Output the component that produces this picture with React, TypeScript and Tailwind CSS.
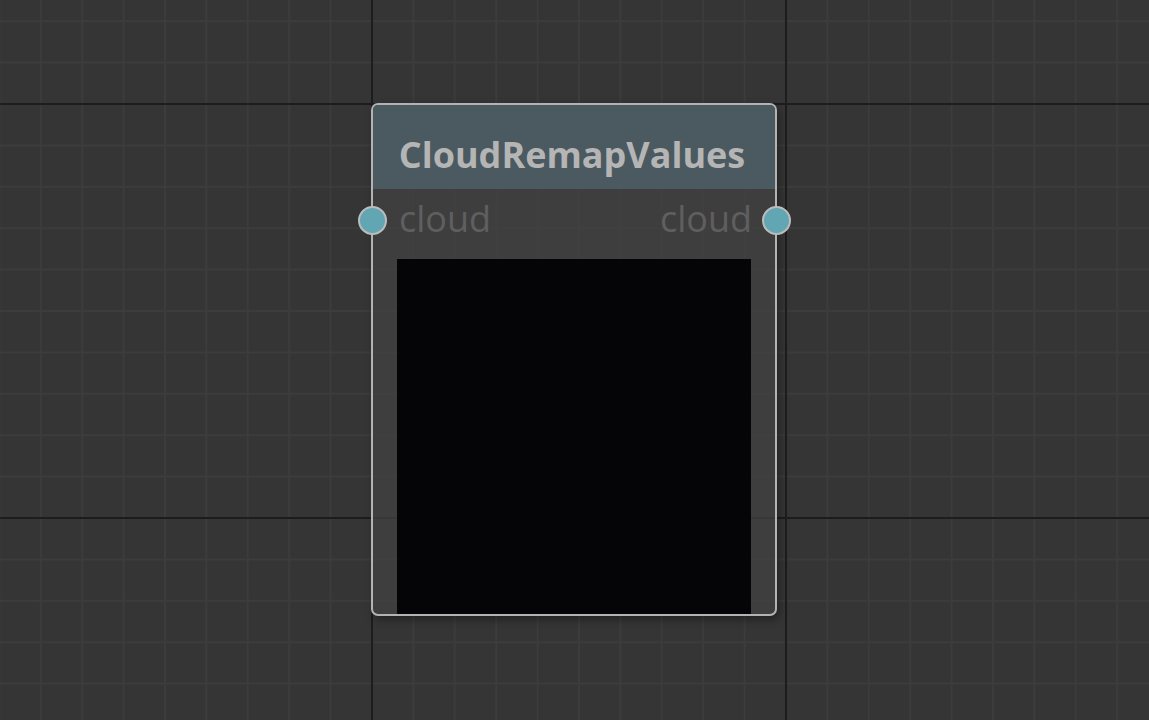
const W = 1149;
const H = 720;
const STEP = 41.4;
const ORIGIN_X = 372;
const ORIGIN_Y = 104;

function lines(origin: number, max: number) {
  const out: { pos: number; major: boolean }[] = [];
  const start = origin - Math.ceil(origin / STEP) * STEP;
  for (let i = 0; start + i * STEP <= max + 1; i++) {
    const pos = start + i * STEP;
    const k = Math.round((pos - origin) / STEP);
    out.push({ pos, major: k % 10 === 0 });
  }
  return out;
}

function Grid() {
  const xs = lines(ORIGIN_X, W);
  const ys = lines(ORIGIN_Y, H);
  return (
    <svg className="absolute inset-0" width={W} height={H} viewBox={`0 0 ${W} ${H}`}>
      <rect width={W} height={H} fill="#353535" />
      {xs.filter((l) => !l.major).map((l) => (
        <line key={"vx" + l.pos} x1={l.pos} x2={l.pos} y1={0} y2={H} stroke="#3c3c3c" strokeWidth={2} />
      ))}
      {ys.filter((l) => !l.major).map((l) => (
        <line key={"hy" + l.pos} y1={l.pos} y2={l.pos} x1={0} x2={W} stroke="#3c3c3c" strokeWidth={2} />
      ))}
      {xs.filter((l) => l.major).map((l) => (
        <line key={"mx" + l.pos} x1={l.pos} x2={l.pos} y1={0} y2={H} stroke="#1d1d1d" strokeWidth={2} />
      ))}
      {ys.filter((l) => l.major).map((l) => (
        <line key={"my" + l.pos} y1={l.pos} y2={l.pos} x1={0} x2={W} stroke="#1d1d1d" strokeWidth={2} />
      ))}
    </svg>
  );
}

function Port({ side }: { side: "left" | "right" }) {
  return (
    <div
      className={
        "absolute top-[16.5px] w-[29px] h-[29px] rounded-full bg-[#62a6b4] border-2 border-[#bcbcbc] " +
        (side === "left" ? "left-[-15.5px]" : "right-[-15.5px]")
      }
    />
  );
}

export default function App() {
  return (
    <div
      className="relative w-[1149px] h-[720px] overflow-hidden bg-[#353535]"
      style={{ fontFamily: '"Open Sans", "Noto Sans", sans-serif' }}
    >
      <Grid />

      {/* node */}
      <div className="absolute left-[371px] top-[103px] w-[406px] h-[513px] rounded-[7px] border-2 border-[#b3b3b3] bg-[rgba(66,66,66,0.75)] shadow-[3px_4px_8px_rgba(0,0,0,0.35)] flex flex-col">
        <div className="h-[84px] shrink-0 bg-[#4b5a60] rounded-t-[5px] pt-[32px] pr-[4px] text-center">
          <span className="block text-[36px] leading-[36px] font-bold text-[#b5b5b5]">CloudRemapValues</span>
        </div>

        <div className="relative h-[70px] shrink-0 flex justify-between pl-[26px] pr-[23px] pt-[12px]">
          <span className="text-[36px] leading-[36px] text-[#5f5f5f]">cloud</span>
          <span className="text-[36px] leading-[36px] text-[#5f5f5f]">cloud</span>
          <Port side="left" />
          <Port side="right" />
        </div>

        <div className="flex-1 mx-[24px] bg-[#050508]" />
      </div>
    </div>
  );
}
